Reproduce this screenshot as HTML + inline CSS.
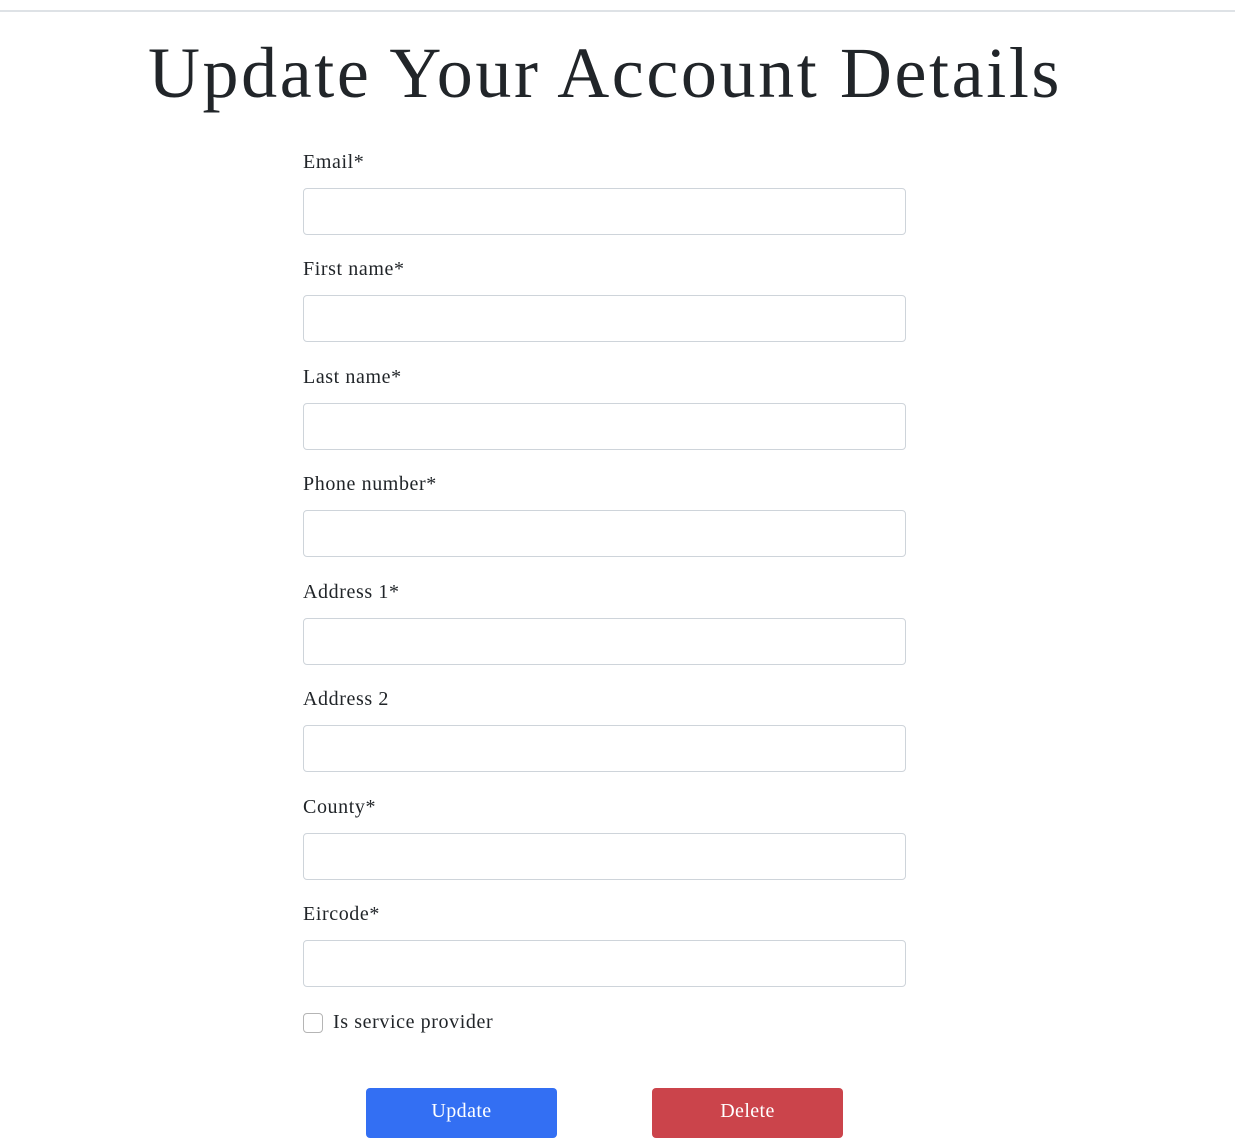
<!DOCTYPE html>
<html><head><meta charset="utf-8"><style>
html,body{margin:0;padding:0;background:#fff;width:1235px;height:1130px;overflow:hidden;font-family:"Liberation Serif",serif;color:#212529}
.top{position:absolute;left:0;top:10px;width:1235px;height:2px;background:#dee2e6}
h1{position:absolute;left:0;width:1210px;text-align:center;top:30px;margin:0;font-size:72px;font-weight:400;line-height:86px;letter-spacing:2.6px}
.lbl{position:absolute;left:303px;font-size:20px;line-height:24px;letter-spacing:0.6px}
.inp{position:absolute;left:303px;width:601px;height:45px;border:1px solid #ced4da;border-radius:4px}
.cb{position:absolute;left:303px;top:1013px;width:18px;height:18px;border:1px solid #b5b5b5;border-radius:4px}
.cbl{position:absolute;left:333px;top:1010px;font-size:20px;line-height:24px;letter-spacing:0.6px}
.btn{position:absolute;top:1088px;width:191px;height:50px;border-radius:4px;color:#fff;font-size:20px;text-align:center;line-height:46px;letter-spacing:0.4px}
</style></head><body>
<div class="top"></div>
<h1>Update Your Account Details</h1>
<div class="lbl" style="top:150px">Email*</div><div class="inp" style="top:188px"></div>
<div class="lbl" style="top:257px">First name*</div><div class="inp" style="top:295px"></div>
<div class="lbl" style="top:365px">Last name*</div><div class="inp" style="top:403px"></div>
<div class="lbl" style="top:472px">Phone number*</div><div class="inp" style="top:510px"></div>
<div class="lbl" style="top:580px">Address 1*</div><div class="inp" style="top:618px"></div>
<div class="lbl" style="top:687px">Address 2</div><div class="inp" style="top:725px"></div>
<div class="lbl" style="top:795px">County*</div><div class="inp" style="top:833px"></div>
<div class="lbl" style="top:902px">Eircode*</div><div class="inp" style="top:940px"></div>
<div class="cb"></div><div class="cbl">Is service provider</div>
<div class="btn" style="left:366px;background:#336ff3">Update</div>
<div class="btn" style="left:652px;background:#cb444b">Delete</div>
</body></html>
